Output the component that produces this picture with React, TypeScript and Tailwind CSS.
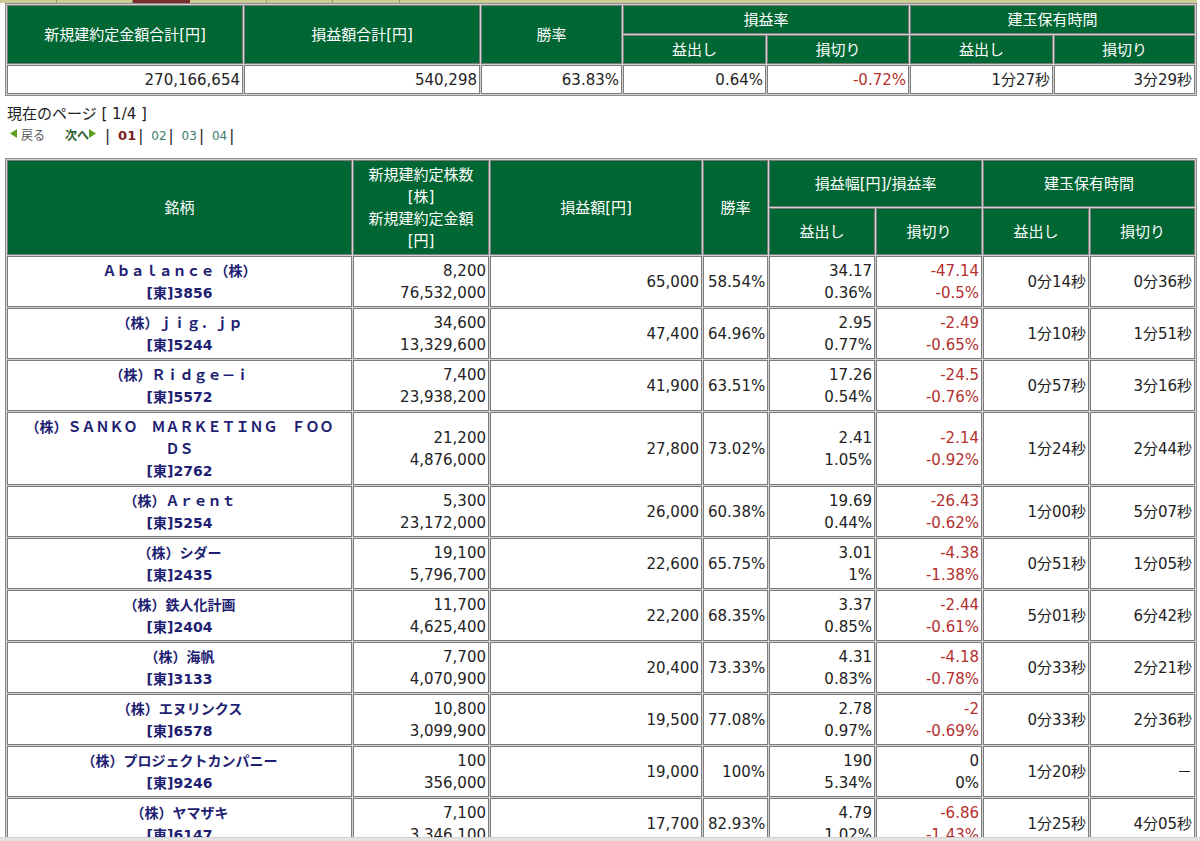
import React from "react";

const FONT = "font-['DejaVu_Sans','Noto_Sans_CJK_JP',sans-serif]";

interface Row {
  name: string;
  code: string;
  qty: string;
  amount: string;
  pl: string;
  win: string;
  gainW: string;
  gainR: string;
  lossW: string;
  lossR: string;
  gainT: string;
  lossT: string;
  flat?: boolean;
}

const rows: Row[] = [
  { name: "Ａｂａｌａｎｃｅ（株）", code: "[東]3856", qty: "8,200", amount: "76,532,000", pl: "65,000", win: "58.54%", gainW: "34.17", gainR: "0.36%", lossW: "-47.14", lossR: "-0.5%", gainT: "0分14秒", lossT: "0分36秒" },
  { name: "（株）ｊｉｇ．ｊｐ", code: "[東]5244", qty: "34,600", amount: "13,329,600", pl: "47,400", win: "64.96%", gainW: "2.95", gainR: "0.77%", lossW: "-2.49", lossR: "-0.65%", gainT: "1分10秒", lossT: "1分51秒" },
  { name: "（株）Ｒｉｄｇｅ－ｉ", code: "[東]5572", qty: "7,400", amount: "23,938,200", pl: "41,900", win: "63.51%", gainW: "17.26", gainR: "0.54%", lossW: "-24.5", lossR: "-0.76%", gainT: "0分57秒", lossT: "3分16秒" },
  { name: "（株）ＳＡＮＫＯ　ＭＡＲＫＥＴＩＮＧ　ＦＯＯＤＳ", code: "[東]2762", qty: "21,200", amount: "4,876,000", pl: "27,800", win: "73.02%", gainW: "2.41", gainR: "1.05%", lossW: "-2.14", lossR: "-0.92%", gainT: "1分24秒", lossT: "2分44秒" },
  { name: "（株）Ａｒｅｎｔ", code: "[東]5254", qty: "5,300", amount: "23,172,000", pl: "26,000", win: "60.38%", gainW: "19.69", gainR: "0.44%", lossW: "-26.43", lossR: "-0.62%", gainT: "1分00秒", lossT: "5分07秒" },
  { name: "（株）シダー", code: "[東]2435", qty: "19,100", amount: "5,796,700", pl: "22,600", win: "65.75%", gainW: "3.01", gainR: "1%", lossW: "-4.38", lossR: "-1.38%", gainT: "0分51秒", lossT: "1分05秒" },
  { name: "（株）鉄人化計画", code: "[東]2404", qty: "11,700", amount: "4,625,400", pl: "22,200", win: "68.35%", gainW: "3.37", gainR: "0.85%", lossW: "-2.44", lossR: "-0.61%", gainT: "5分01秒", lossT: "6分42秒" },
  { name: "（株）海帆", code: "[東]3133", qty: "7,700", amount: "4,070,900", pl: "20,400", win: "73.33%", gainW: "4.31", gainR: "0.83%", lossW: "-4.18", lossR: "-0.78%", gainT: "0分33秒", lossT: "2分21秒" },
  { name: "（株）エヌリンクス", code: "[東]6578", qty: "10,800", amount: "3,099,900", pl: "19,500", win: "77.08%", gainW: "2.78", gainR: "0.97%", lossW: "-2", lossR: "-0.69%", gainT: "0分33秒", lossT: "2分36秒" },
  { name: "（株）プロジェクトカンパニー", code: "[東]9246", qty: "100", amount: "356,000", pl: "19,000", win: "100%", gainW: "190", gainR: "5.34%", lossW: "0", lossR: "0%", gainT: "1分20秒", lossT: "－", flat: true },
  { name: "（株）ヤマザキ", code: "[東]6147", qty: "7,100", amount: "3,346,100", pl: "17,700", win: "82.93%", gainW: "4.79", gainR: "1.02%", lossW: "-6.86", lossR: "-1.43%", gainT: "1分25秒", lossT: "4分05秒" },
];

const th = "bg-[#006633] text-white font-normal text-center align-middle border border-[#7c7c7c] pt-[3px] pb-[2px] px-1";
const td = "bg-white border border-[#7c7c7c] text-right align-middle pt-[3px] pb-[2px] pr-[2px] pl-1";
const tdName = "bg-white border border-[#7c7c7c] text-center align-middle pt-[3px] pb-[2px] px-1 text-[14px] font-bold text-[#1e1e72]";
const tdLoss = "bg-white border border-[#7c7c7c] text-right align-middle pt-[3px] pb-[2px] pr-[2px] pl-1 text-[#b3302f]";
const table = "table-fixed w-[1192px] ml-[5px] border-separate border-spacing-[1px] border border-[#8c8c8c] bg-[#d2d2d2]";

function Tri({ dir }: { dir: "l" | "r" }) {
  return (
    <svg width="7" height="9" viewBox="0 0 7 9" className="inline-block align-top mt-[4px]">
      {dir === "l" ? <polygon points="7,0 7,9 0,4.5" fill="#5fa021" /> : <polygon points="0,0 0,9 7,4.5" fill="#5fa021" />}
    </svg>
  );
}

function Bar() {
  return <span className="ml-[2px] text-[15px] text-[#222]">|</span>;
}

export default function App() {
  return (
    <div className={`${FONT} h-[841px] overflow-hidden bg-white text-[15px] leading-[22px] text-[#222]`}>
      {/* tab strip cut off at the top */}
      <div className="flex h-[3px] w-[1197px] bg-[#cfcb95]">
        <div className="w-[57px] border-r border-[#9b9762]" />
        <div className="w-[76px] border-r border-[#9b9762]" />
        <div className="w-[57px] bg-[#7b2c2c]" />
        <div className="w-[77px] border-r border-[#9b9762]" />
        <div className="w-[66px] border-r border-[#9b9762]" />
        <div className="w-[67px] border-r border-[#9b9762]" />
      </div>

      {/* summary */}
      <table className={table}>
        <colgroup>
          <col className="w-[236px]" />
          <col className="w-[236px]" />
          <col className="w-[141px]" />
          <col className="w-[143px]" />
          <col className="w-[142px]" />
          <col className="w-[143px]" />
          <col className="w-[141px]" />
        </colgroup>
        <thead>
          <tr>
            <th rowSpan={2} className={th}>新規建約定金額合計[円]</th>
            <th rowSpan={2} className={th}>損益額合計[円]</th>
            <th rowSpan={2} className={th}>勝率</th>
            <th colSpan={2} className={th}>損益率</th>
            <th colSpan={2} className={th}>建玉保有時間</th>
          </tr>
          <tr>
            <th className={th}>益出し</th>
            <th className={th}>損切り</th>
            <th className={th}>益出し</th>
            <th className={th}>損切り</th>
          </tr>
        </thead>
        <tbody>
          <tr>
            <td className={td}>270,166,654</td>
            <td className={td}>540,298</td>
            <td className={td}>63.83%</td>
            <td className={td}>0.64%</td>
            <td className={tdLoss}>-0.72%</td>
            <td className={td}>1分27秒</td>
            <td className={td}>3分29秒</td>
          </tr>
        </tbody>
      </table>

      {/* pager */}
      <div className="mt-[7px] pl-[7px]">現在のページ [ 1/4 ]</div>
      <div className="pl-[10px] flex items-start text-[12px] leading-[22px]">
        <Tri dir="l" />
        <span className="ml-[4px] text-[#555]">戻る</span>
        <span className="ml-[20px] text-[#2f5e2f] font-bold">次へ</span>
        <Tri dir="r" />
        <span className="ml-[9px] text-[15px] text-[#222]">|</span>
        <span className="ml-[8px] text-[13px] font-bold text-[#7a1c1c]">01</span>
        <Bar />
        <span className="ml-[8px] text-[#3b7d6a]">02</span>
        <Bar />
        <span className="ml-[8px] text-[#3b7d6a]">03</span>
        <Bar />
        <span className="ml-[8px] text-[#3b7d6a]">04</span>
        <Bar />
      </div>

      {/* per-stock list */}
      <table className={`${table} mt-[11px]`}>
        <colgroup>
          <col className="w-[345px]" />
          <col className="w-[136px]" />
          <col className="w-[212px]" />
          <col className="w-[65px]" />
          <col className="w-[106px]" />
          <col className="w-[106px]" />
          <col className="w-[106px]" />
          <col className="w-[105px]" />
        </colgroup>
        <thead>
          <tr>
            <th rowSpan={2} className={th}>銘柄</th>
            <th rowSpan={2} className={th}>
              新規建約定株数<br />[株]<br />新規建約定金額<br />[円]
            </th>
            <th rowSpan={2} className={th}>損益額[円]</th>
            <th rowSpan={2} className={th}>勝率</th>
            <th colSpan={2} className={th}>損益幅[円]/損益率</th>
            <th colSpan={2} className={th}>建玉保有時間</th>
          </tr>
          <tr>
            <th className={th}>益出し</th>
            <th className={th}>損切り</th>
            <th className={th}>益出し</th>
            <th className={th}>損切り</th>
          </tr>
        </thead>
        <tbody>
          {rows.map((r) => (
            <tr key={r.code}>
              <td className={tdName}>
                <span className="inline-block max-w-[318px]">{r.name}</span>
                <br />
                {r.code}
              </td>
              <td className={td}>{r.qty}<br />{r.amount}</td>
              <td className={td}>{r.pl}</td>
              <td className={td}>{r.win}</td>
              <td className={td}>{r.gainW}<br />{r.gainR}</td>
              <td className={r.flat ? td : tdLoss}>{r.lossW}<br />{r.lossR}</td>
              <td className={td}>{r.gainT}</td>
              <td className={td}>{r.lossT}</td>
            </tr>
          ))}
        </tbody>
      </table>

      {/* horizontal scroll bar peeking at the bottom */}
      <div className="fixed bottom-0 left-0 right-0 h-[4px] bg-[#e4e4e4] border-t border-[#d0d0d0]" />
    </div>
  );
}
